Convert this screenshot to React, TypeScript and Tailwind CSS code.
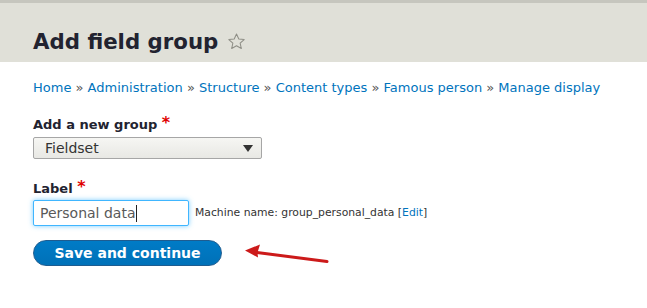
import React from "react";

const font = { fontFamily: '"DejaVu Sans", "Noto Sans", sans-serif' };

const crumbs = [
  "Home",
  "Administration",
  "Structure",
  "Content types",
  "Famous person",
  "Manage display",
];

function Star() {
  return (
    <svg width="19" height="19" viewBox="0 0 24 24" className="ml-[9px] mb-[1px]">
      <path
        d="M12 2.5l2.9 6.3 6.8.7-5.1 4.6 1.5 6.8L12 17.4l-6.1 3.5 1.5-6.8-5.1-4.6 6.8-.7z"
        fill="none"
        stroke="#8e8e86"
        strokeWidth="1.3"
        strokeLinejoin="round"
      />
    </svg>
  );
}

function Required() {
  return <span className="text-[#e00000] text-[16px] leading-[10px] align-[1px]">*</span>;
}

export default function App() {
  return (
    <div className="relative w-[647px] h-[308px] bg-white overflow-hidden" style={font}>
      {/* Header */}
      <div className="h-[62px] bg-[#e0e0d8] border-t-[3px] border-[#c6c6be] pl-[33px] flex items-end pb-[6px]">
        <h1 className="flex items-center text-[21.3px] leading-[28px] font-bold text-[#222330]">
          Add field group
          <Star />
        </h1>
      </div>

      <div className="pl-[33px]">
        {/* Breadcrumb */}
        <div className="mt-[16px] text-[13px] leading-[20px] text-[#333]">
          {crumbs.map((c, i) => (
            <span key={c}>
              {i > 0 && <span className="text-[#555]"> » </span>}
              <a className="text-[#0074bd]">{c}</a>
            </span>
          ))}
        </div>

        {/* Group select */}
        <div className="mt-[18px] text-[13px] leading-[18px] font-bold text-[#222330]">
          Add a new group <Required />
        </div>
        <div className="mt-[3px] w-[229px] h-[22px] rounded-[2px] border border-[#a6a6a6] bg-gradient-to-b from-[#f6f6f3] to-[#e8e8e4] flex items-center justify-between pl-[11px] pr-[8px]">
          <span className="text-[14px] text-[#333]">Fieldset</span>
          <svg width="10" height="7" viewBox="0 0 10 7">
            <path d="M0 0h10L5 7z" fill="#333" />
          </svg>
        </div>

        {/* Label */}
        <div className="mt-[21px] text-[13px] leading-[18px] font-bold text-[#222330]">
          Label <Required />
        </div>
        <div className="mt-[2px] flex items-center">
          <div className="w-[156px] h-[26px] rounded-[2px] border border-[#40b6ff] shadow-[0_0_5px_rgba(64,182,255,0.7)] bg-white flex items-center pl-[6px]">
            <span className="text-[14px] text-[#595959]">Personal data</span>
            <span className="w-px h-[17px] bg-[#222]" />
          </div>
          <span className="ml-[6px] text-[10.8px] text-[#333]">
            Machine name: group_personal_data [<a className="text-[#0074bd]">Edit</a>]
          </span>
        </div>

        {/* Button */}
        <button className="mt-[14px] w-[189px] h-[26px] rounded-full bg-gradient-to-b from-[#007bc6] to-[#0071b8] border border-[#1e5c90] text-white text-[14px] font-bold flex items-center justify-center">
          Save and continue
        </button>
      </div>

      {/* Annotation arrow */}
      <svg className="absolute left-0 top-0" width="647" height="308">
        <line x1="257" y1="252.5" x2="327" y2="261.5" stroke="#cc1a1a" strokeWidth="3" strokeLinecap="round" />
        <path d="M245 250.5 L260 244.5 L257.5 252.5 L258 257.5 Z" fill="#cc1a1a" />
      </svg>
    </div>
  );
}
